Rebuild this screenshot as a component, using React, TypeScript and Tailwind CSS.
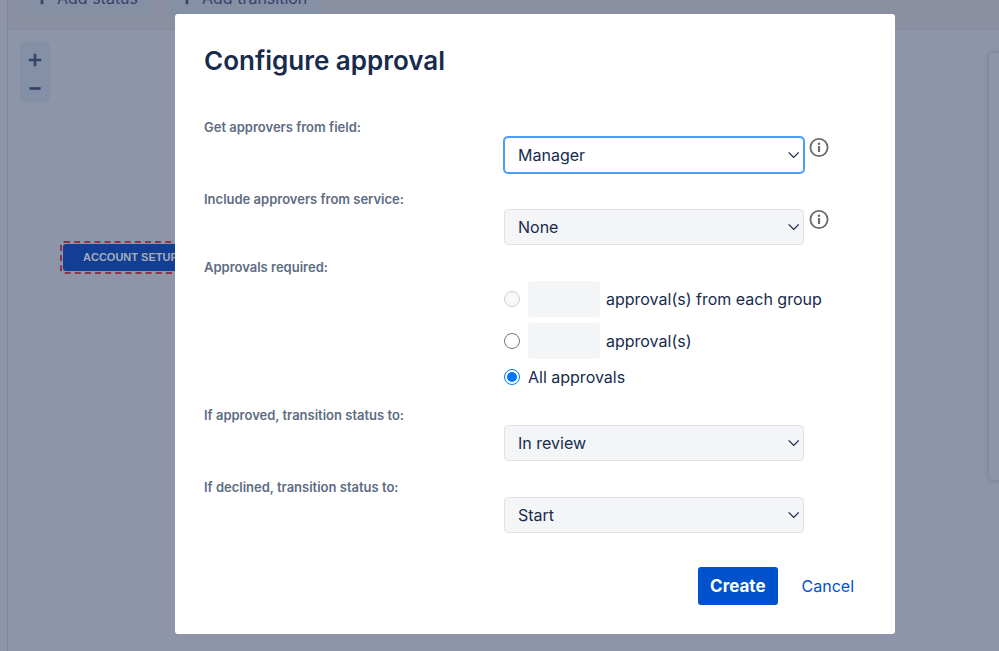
import { useState, type ReactNode } from 'react'

const STATUSES = ['Start', 'In review', 'Account setup', 'Done']

function PlusGlyph() {
  return (
    <svg viewBox="0 0 14 14" className="size-3.5" fill="none" stroke="currentColor" strokeWidth="2.7" aria-hidden="true">
      <path d="M7 .8v12.4M.8 7h12.4" />
    </svg>
  )
}

function MinusGlyph() {
  return (
    <svg viewBox="0 0 14 14" className="size-3.5" fill="none" stroke="currentColor" strokeWidth="2.7" aria-hidden="true">
      <path d="M1.4 6.5h11.2" />
    </svg>
  )
}

function InfoIcon() {
  return (
    <svg viewBox="0 0 20 20" className="size-5" aria-hidden="true">
      <circle cx="10" cy="10.5" r="8.6" fill="none" stroke="#6b6b6b" strokeWidth="1.8" />
      <circle cx="10" cy="6.8" r="1.3" fill="#6b6b6b" />
      <path d="M10 9.1v6" stroke="#6b6b6b" strokeWidth="2.2" />
    </svg>
  )
}

type SelectProps = {
  id: string
  value: string
  options: string[]
  active?: boolean
  onChange: (value: string) => void
}

function Select({ id, value, options, active, onChange }: SelectProps) {
  return (
    <div className="relative w-[300px]">
      <select
        id={id}
        value={value}
        onChange={(e) => onChange(e.target.value)}
        className={`block h-9 w-full appearance-none rounded border pl-[13px] pr-8 text-base text-[#172b4d] outline-none ${
          active ? 'border-[#4c9aff] bg-white ring-1 ring-[#4c9aff]' : 'border-[#dfe1e6] bg-[#f4f5f7]'
        }`}
      >
        {options.map((o) => (
          <option key={o}>{o}</option>
        ))}
      </select>
      <svg
        viewBox="0 0 12 8"
        className="pointer-events-none absolute right-1 top-3.5 h-2 w-3"
        fill="none"
        stroke="#172b4d"
        strokeWidth="1.3"
        aria-hidden="true"
      >
        <path d="M.7 1.4l5 5 5-5" />
      </svg>
    </div>
  )
}

function Field({ id, label, info, children }: { id: string; label: string; info?: boolean; children: ReactNode }) {
  return (
    <div className="grid grid-cols-[300px_1fr]">
      <label htmlFor={id} className="text-[13px] leading-4 font-semibold text-[#5e6c84]">
        {label}
      </label>
      <div className="flex gap-[5px] pt-[18px]">
        {children}
        {info && (
          <button type="button" aria-label="More information" className="size-5">
            <InfoIcon />
          </button>
        )}
      </div>
    </div>
  )
}

const radioClass =
  'size-4 shrink-0 appearance-none rounded-full border border-[#767676] bg-white checked:border-[#0075ff] checked:bg-[#0075ff] checked:bg-clip-content checked:p-0.5 disabled:border-[#d0d0d0] disabled:bg-[#f8f8f8]'
const countClass = 'h-9 w-[72px] rounded bg-[#f4f5f7] px-2 outline-none'

function Workflow() {
  return (
    <div className="flex min-h-screen bg-[#8f95a8] text-[#34436a]">
      <div className="w-2 shrink-0 border-r border-[#838a9f]" />
      <div className="flex min-w-0 flex-1 flex-col">
        <header className="flex h-[30px] shrink-0 items-end gap-3 overflow-hidden border-b border-[#858b9f] bg-[#8a90a2] pb-3 pl-3">
          <button type="button" className="flex h-[38px] items-center gap-2 rounded bg-[#8690a4] px-[15px] text-base">
            <PlusGlyph />
            Add status
          </button>
          <button type="button" className="flex h-[38px] items-center gap-2 rounded bg-[#8690a4] px-[15px] text-base">
            <PlusGlyph />
            Add transition
          </button>
        </header>
        <div className="relative flex-1 overflow-hidden">
          <div className="m-3 flex w-[30px] flex-col rounded bg-[#8490a5]">
            <button type="button" aria-label="Zoom in" className="flex h-9 items-center justify-center">
              <PlusGlyph />
            </button>
            <button type="button" aria-label="Zoom out" className="flex h-6 items-start justify-center pt-1">
              <MinusGlyph />
            </button>
          </div>
          <div className="absolute left-[52px] top-[211px] rounded border-2 border-dashed border-[#8c3545] p-px">
            <div className="flex h-[27px] items-center rounded-[3px] bg-[#123f93] px-5 font-['Liberation_Sans',sans-serif] text-[11px] font-bold text-[#a5abba]">
              ACCOUNT SETUP
            </div>
          </div>
          <aside className="absolute -right-3 top-[23px] h-[427px] w-[22px] rounded bg-[#8f95a8] shadow-[0_0_4px_1px_#7b8296]" />
        </div>
      </div>
    </div>
  )
}

export default function App() {
  const [field, setField] = useState('Manager')
  const [service, setService] = useState('None')
  const [required, setRequired] = useState('all')
  const [approved, setApproved] = useState('In review')
  const [declined, setDeclined] = useState('Start')

  return (
    <div className="relative font-['Inter',sans-serif]">
      <Workflow />
      <div className="absolute inset-0 flex items-start justify-center pt-3.5 pl-[71px]">
        <form
          role="dialog"
          aria-labelledby="dialog-title"
          onSubmit={(e) => e.preventDefault()}
          className="w-full max-w-[720px] rounded-[3px] bg-white px-[29px] pt-[29px] pb-[29px] text-base leading-6 text-[#172b4d]"
        >
          <h1 id="dialog-title" className="text-[26px] leading-9 font-semibold">
            Configure approval
          </h1>

          <div className="mt-10 flex flex-col gap-[18px]">
            <Field id="field" label="Get approvers from field:" info>
              <Select id="field" value={field} options={['Manager', 'Approvers']} onChange={setField} active />
            </Field>
            <Field id="service" label="Include approvers from service:" info>
              <Select id="service" value={service} options={['None', 'Affected services']} onChange={setService} />
            </Field>
          </div>

          <fieldset className="mt-[14px] grid grid-cols-[300px_1fr]">
            <legend className="float-left text-[13px] leading-4 font-semibold text-[#5e6c84]">Approvals required:</legend>
            <div className="col-start-2 flex flex-col gap-1.5 pt-[22px]">
              <div className="flex items-center">
                <input type="radio" name="required" id="per-group" className={radioClass} disabled />
                <input type="text" aria-label="Approvals from each group" className={`ml-2 ${countClass}`} disabled />
                <label htmlFor="per-group" className="ml-1.5">approval(s) from each group</label>
              </div>
              <div className="flex items-center">
                <input
                  type="radio"
                  name="required"
                  id="count"
                  className={radioClass}
                  checked={required === 'count'}
                  onChange={() => setRequired('count')}
                />
                <input type="text" aria-label="Number of approvals" className={`ml-2 ${countClass}`} />
                <label htmlFor="count" className="ml-1.5">approval(s)</label>
              </div>
              <div className="flex items-center">
                <input
                  type="radio"
                  name="required"
                  id="all"
                  className={radioClass}
                  checked={required === 'all'}
                  onChange={() => setRequired('all')}
                />
                <label htmlFor="all" className="ml-2">All approvals</label>
              </div>
            </div>
          </fieldset>

          <div className="mt-[18px] flex flex-col gap-[18px]">
            <Field id="approved" label="If approved, transition status to:">
              <Select id="approved" value={approved} options={STATUSES} onChange={setApproved} />
            </Field>
            <Field id="declined" label="If declined, transition status to:">
              <Select id="declined" value={declined} options={STATUSES} onChange={setDeclined} />
            </Field>
          </div>

          <div className="mt-[34px] flex justify-end gap-3">
            <button type="submit" className="h-[38px] rounded-[3px] bg-[#0052cc] px-3 text-[17px] font-bold text-white">
              Create
            </button>
            <button type="button" className="h-[38px] px-3 text-[#0052cc]">
              Cancel
            </button>
          </div>
        </form>
      </div>
    </div>
  )
}
